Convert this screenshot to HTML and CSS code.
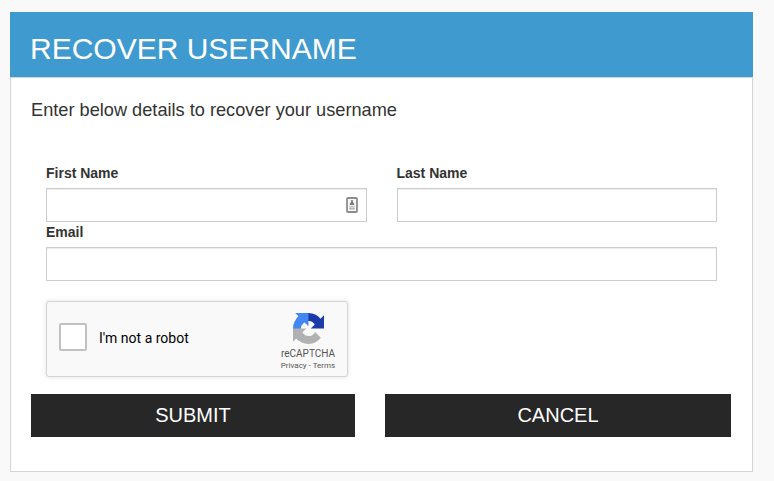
FILE: index.html
```html
<!DOCTYPE html>
<html lang="en">
<head>
<meta charset="utf-8">
<title>Recover Username</title>
<link rel="stylesheet" href="styles.css">
</head>
<body>
<main class="panel">
  <h1 class="panel-heading">RECOVER USERNAME</h1>
  <form class="panel-body">
    <p class="intro">Enter below details to recover your username</p>
    <div class="fields">
      <div class="row">
        <div class="field">
          <label for="first">First Name</label>
          <div class="control">
            <input id="first" type="text">
            <svg class="autofill" width="12" height="16" viewBox="0 0 12 16">
              <rect x="1" y="1" width="10" height="14" rx="1" fill="#f7f7f7" stroke="#8c8c8c" stroke-width="1.8"/>
              <path d="M5.2 3h1.6v2l1.4 2v1H3.8V7l1.4-2z" fill="#777"/>
              <path d="M3.2 9.2h5.6v1.2H3.2zM3.2 11h5.6v1.4H3.2z" fill="#b5b5b5"/>
            </svg>
          </div>
        </div>
        <div class="field">
          <label for="last">Last Name</label>
          <input id="last" type="text">
        </div>
      </div>
      <div class="field">
        <label for="email">Email</label>
        <input id="email" type="text">
      </div>
      <div class="captcha">
        <span class="checkbox"></span>
        <span class="captcha-label">I'm not a robot</span>
        <div class="brand">
          <svg width="31" height="31" viewBox="0 0 64 64">
            <path fill="#1c3aa9" d="M64 31.955l-.033-1.37V4.687l-7.16 7.16C50.948 4.674 42.033.093 32.05.093c-10.4 0-19.622 4.96-25.458 12.64l11.736 11.86a15.55 15.55 0 0 1 4.754-5.334c2.05-1.6 4.952-2.906 8.968-2.906.485 0 .86.057 1.135.163 4.976.393 9.288 3.14 11.828 7.124l-8.307 8.307L64 31.953"/>
            <path fill="#4285f4" d="M31.862.094l-1.37.033H4.594l7.16 7.16C4.58 13.147 0 22.06 0 32.046c0 10.4 4.96 19.622 12.64 25.458L24.5 45.768a15.55 15.55 0 0 1-5.334-4.754c-1.6-2.05-2.906-4.952-2.906-8.968 0-.485.057-.86.163-1.135.393-4.976 3.14-9.288 7.124-11.828l8.307 8.307L31.86.095"/>
            <path fill="#b1b1b1" d="M.001 32.045l.033 1.37v25.898l7.16-7.16c5.86 7.173 14.774 11.754 24.76 11.754 10.4 0 19.622-4.96 25.458-12.64l-11.736-11.86a15.55 15.55 0 0 1-4.754 5.334c-2.05 1.6-4.952 2.906-8.968 2.906-.485 0-.86-.057-1.135-.163-4.976-.393-9.288-3.14-11.828-7.124l8.307-8.307c-10.522.04-22.4.066-27.295-.005"/>
          </svg>
          <div class="brand-name">reCAPTCHA</div>
          <div class="brand-links">Privacy - Terms</div>
        </div>
      </div>
    </div>
    <div class="actions">
      <button type="button">SUBMIT</button>
      <button type="button">CANCEL</button>
    </div>
  </form>
</main>
</body>
</html>
```
FILE: styles.css
```css
* { box-sizing: border-box; }
body {
  margin: 0;
  padding: 12px 21px 9px 10px;
  height: 481px;
  background: #f9f9f9;
  font: 14px/20px "Liberation Sans", Arial, sans-serif;
  color: #333;
}
.panel { height: 460px; display: flex; flex-direction: column; }
.panel-heading {
  margin: 0;
  height: 65px;
  padding: 20px 20px 0;
  background: #3f9bcf;
  color: #fff;
  font-size: 30px;
  font-weight: 400;
  line-height: 33px;
}
.panel-body {
  flex: 1;
  padding: 20px 21px 0 20px;
  border: 1px solid #d5d5d5;
  background: #fff;
}
.intro { margin: 0; font-size: 18.2px; line-height: 24px; }
.fields { padding: 41px 14px 0 15px; }
.row { display: grid; grid-template-columns: 320.5px 320.5px; gap: 30px; }
label { display: block; height: 25px; font-weight: 700; }
.control { position: relative; }
input {
  display: block;
  width: 100%;
  height: 34px;
  padding: 6px 12px;
  border: 1px solid #ccc;
  border-radius: 0;
  background: #fff;
  box-shadow: inset 0 1px 1px rgba(0, 0, 0, .075);
}
.autofill { position: absolute; right: 9px; top: 9px; }
.captcha {
  display: flex;
  align-items: center;
  width: 302px;
  height: 76px;
  margin-top: 20px;
  padding: 0 12px;
  border: 1px solid #d3d3d3;
  border-radius: 3px;
  background: #f9f9f9;
  box-shadow: 0 0 4px 1px rgba(0, 0, 0, .08);
  font-family: Roboto, sans-serif;
}
.checkbox {
  width: 28px;
  height: 28px;
  margin-top: -4px;
  border: 2px solid #c1c1c1;
  border-radius: 2px;
  background: #fff;
}
.captcha-label { margin: -2px 0 0 12px; color: #000; line-height: 17px; }
.brand {
  width: 60px;
  height: 64px;
  margin: 11px -3px 0 auto;
  color: #555;
  text-align: center;
  white-space: nowrap;
}
.brand svg { display: block; margin: 0 auto; }
.brand-name { margin-top: 4px; font-size: 10px; line-height: 12px; }
.brand-links { margin-top: 1px; font-size: 8px; line-height: 10px; }
.actions { display: grid; grid-template-columns: 324px 346px; gap: 30px; margin-top: 17px; }
button {
  height: 43px;
  padding: 0 0 2px;
  border: 0;
  background: #272727;
  color: #fff;
  font: 20px/28px "Liberation Sans", Arial, sans-serif;
}
```
